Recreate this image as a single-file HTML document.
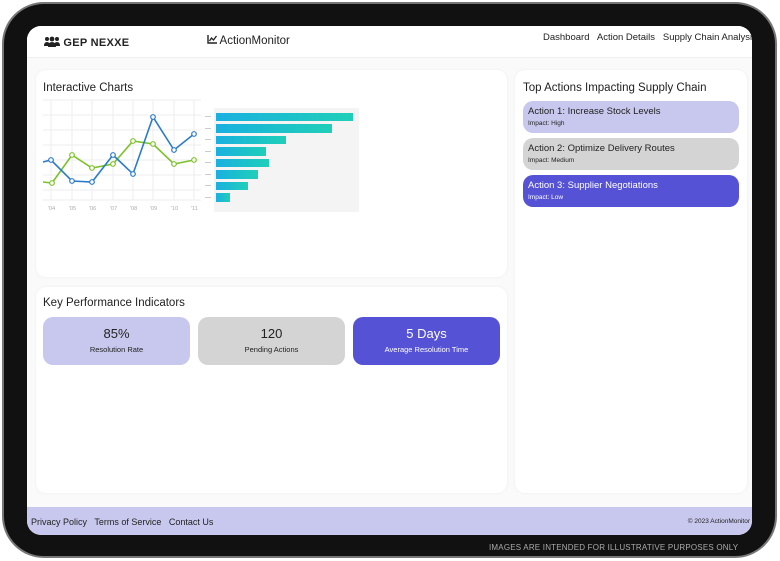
<!DOCTYPE html>
<html><head><meta charset="utf-8"><style>
*{box-sizing:border-box;margin:0;padding:0}
body{width:780px;height:561px;background:#fff;position:relative;overflow:hidden;font-family:"Liberation Sans",sans-serif;color:#222}
.bezel{position:absolute;left:2px;top:2px;width:775px;height:556px;border-radius:42px;background:#111;border:2px solid #777}
.screen{position:absolute;left:27px;top:26px;width:725px;height:509px;border-radius:14px;background:#fafafa;overflow:hidden}
.hdr{position:absolute;left:0;top:0;width:725px;height:32px;background:#fff;border-bottom:1px solid #f0f0f0}
.card{position:absolute;background:#fff;border-radius:10px;box-shadow:0 0 3px rgba(0,0,0,.06)}
.t{position:absolute;font-size:11.5px;color:#222}
.act{position:absolute;left:8px;width:216px;height:32px;border-radius:10px;padding:5px 5px}
.act b{display:block;font-weight:normal;font-size:9.5px}
.act i{display:block;font-style:normal;font-size:6.5px;margin-top:3px}
.kpi{position:absolute;top:30px;width:147px;height:48px;border-radius:10px;text-align:center}
.kpi b{display:block;font-weight:normal;font-size:13px;margin-top:9px}
.kpi i{display:block;font-style:normal;font-size:7.5px;margin-top:4px}
.foot{position:absolute;left:0;top:481px;width:725px;height:28px;background:#c8c8ee;font-size:9px}
</style></head><body>
<div class="bezel"></div>
<div class="screen">
 <div class="hdr">
  <div style="position:absolute;left:17px;top:10px;font-size:11px;font-weight:bold;letter-spacing:.3px">
   <span style="display:inline-block;width:16px;height:10px;vertical-align:-1px;position:relative"><svg width="16" height="11" viewBox="0 0 16 11"><circle cx="3" cy="3" r="2" fill="#222"/><circle cx="13" cy="3" r="2" fill="#222"/><circle cx="8" cy="3" r="2.4" fill="#222"/><path d="M0 10q0-4 3-4t3 4zM10 10q0-4 3-4t3 4zM4 11q0-5 4-5t4 5z" fill="#222"/></svg></span> GEP NEXXE</div>
  <div style="position:absolute;left:180px;top:9px;font-size:11.5px">
   <svg width="10" height="9" viewBox="0 0 10 9" style="vertical-align:0"><path d="M1 0v8h9" stroke="#222" fill="none" stroke-width="1.4"/><path d="M2.5 6l2-3 2 2 3-4" stroke="#222" fill="none" stroke-width="1.3"/></svg> ActionMonitor</div>
  <div style="position:absolute;left:516px;top:6px;font-size:9.5px;white-space:nowrap">Dashboard&nbsp;&nbsp; Action Details&nbsp;&nbsp; Supply Chain Analysis</div>
 </div>
 <div class="card" style="left:9px;top:44px;width:471px;height:207px">
  <div class="t" style="left:7px;top:12px">Interactive Charts</div>
  <svg style="position:absolute;left:0;top:0" width="471" height="207">
   <g stroke="#eee" stroke-width="1">
    <line x1="7" y1="30" x2="165" y2="30"/><line x1="7" y1="45" x2="165" y2="45"/><line x1="7" y1="60" x2="165" y2="60"/><line x1="7" y1="75" x2="165" y2="75"/><line x1="7" y1="90" x2="165" y2="90"/><line x1="7" y1="105" x2="165" y2="105"/><line x1="7" y1="120" x2="165" y2="120"/><line x1="7" y1="130" x2="165" y2="130"/>
    <line x1="15" y1="30" x2="15" y2="130"/><line x1="36" y1="30" x2="36" y2="130"/><line x1="56" y1="30" x2="56" y2="130"/><line x1="77" y1="30" x2="77" y2="130"/><line x1="97" y1="30" x2="97" y2="130"/><line x1="117" y1="30" x2="117" y2="130"/><line x1="138" y1="30" x2="138" y2="130"/><line x1="158" y1="30" x2="158" y2="130"/>
   </g>
   <polyline points="7,112 16,113 36,85 56,98 77,94 97,71 117,74 138,94 158,90" fill="none" stroke="#7cc22a" stroke-width="1.6"/>
   <polyline points="7,92 15,90 36,111 56,112 77,85 97,104 117,47 138,80 158,64" fill="none" stroke="#2a7bc8" stroke-width="1.6"/>
   <g fill="#fff" stroke="#7cc22a" stroke-width="1.2"><circle cx="16" cy="113" r="2.3"/><circle cx="36" cy="85" r="2.3"/><circle cx="56" cy="98" r="2.3"/><circle cx="77" cy="94" r="2.3"/><circle cx="97" cy="71" r="2.3"/><circle cx="117" cy="74" r="2.3"/><circle cx="138" cy="94" r="2.3"/><circle cx="158" cy="90" r="2.3"/></g>
   <g fill="#fff" stroke="#2a7bc8" stroke-width="1.2"><circle cx="15" cy="90" r="2.3"/><circle cx="36" cy="111" r="2.3"/><circle cx="56" cy="112" r="2.3"/><circle cx="77" cy="85" r="2.3"/><circle cx="97" cy="104" r="2.3"/><circle cx="117" cy="47" r="2.3"/><circle cx="138" cy="80" r="2.3"/><circle cx="158" cy="64" r="2.3"/></g>
   <g font-size="5.5" fill="#aaa" font-family="Liberation Sans"><text x="12" y="140">'04</text><text x="33" y="140">'05</text><text x="53" y="140">'06</text><text x="74" y="140">'07</text><text x="94" y="140">'08</text><text x="114" y="140">'09</text><text x="135" y="140">'10</text><text x="155" y="140">'11</text></g>
   <defs><linearGradient id="g" x1="0" x2="1"><stop offset="0" stop-color="#1ab0e0"/><stop offset="1" stop-color="#1fcfb8"/></linearGradient></defs>
   <rect x="178" y="38" width="145" height="104" fill="#f4f4f4"/>
   <g fill="url(#g)"><rect x="180" y="43" width="137" height="8"/><rect x="180" y="54" width="116" height="9"/><rect x="180" y="66" width="70" height="8"/><rect x="180" y="77" width="50" height="9"/><rect x="180" y="89" width="53" height="8"/><rect x="180" y="100" width="42" height="9"/><rect x="180" y="112" width="32" height="8"/><rect x="180" y="123" width="14" height="9"/></g>
   <g fill="#ccc"><rect x="169" y="46" width="6" height="1"/><rect x="169" y="58" width="6" height="1"/><rect x="169" y="69" width="6" height="1"/><rect x="169" y="81" width="6" height="1"/><rect x="169" y="92" width="6" height="1"/><rect x="169" y="104" width="6" height="1"/><rect x="169" y="115" width="6" height="1"/><rect x="169" y="127" width="6" height="1"/></g>
  </svg>
 </div>
 <div class="card" style="left:9px;top:261px;width:471px;height:206px">
  <div class="t" style="left:7px;top:10px">Key Performance Indicators</div>
  <div class="kpi" style="left:7px;background:#c8c8ee"><b>85%</b><i>Resolution Rate</i></div>
  <div class="kpi" style="left:162px;background:#d4d4d4"><b>120</b><i>Pending Actions</i></div>
  <div class="kpi" style="left:317px;background:#5652d6;color:#fff"><b>5 Days</b><i>Average Resolution Time</i></div>
 </div>
 <div class="card" style="left:488px;top:44px;width:232px;height:423px">
  <div class="t" style="left:8px;top:12px">Top Actions Impacting Supply Chain</div>
  <div class="act" style="top:31px;background:#c8c8ee"><b>Action 1: Increase Stock Levels</b><i>Impact: High</i></div>
  <div class="act" style="top:68px;background:#d4d4d4"><b>Action 2: Optimize Delivery Routes</b><i>Impact: Medium</i></div>
  <div class="act" style="top:105px;background:#5652d6;color:#fff"><b>Action 3: Supplier Negotiations</b><i>Impact: Low</i></div>
 </div>
 <div class="foot">
  <div style="position:absolute;left:4px;top:10px">Privacy Policy&nbsp;&nbsp; Terms of Service&nbsp;&nbsp; Contact Us</div>
  <div style="position:absolute;right:2px;top:11px;font-size:6.5px">© 2023 ActionMonitor</div>
 </div>
</div>
<div style="position:absolute;left:489px;top:543px;font-size:8px;color:#aaa;letter-spacing:.2px">IMAGES ARE INTENDED FOR ILLUSTRATIVE PURPOSES ONLY</div>
</body></html>
